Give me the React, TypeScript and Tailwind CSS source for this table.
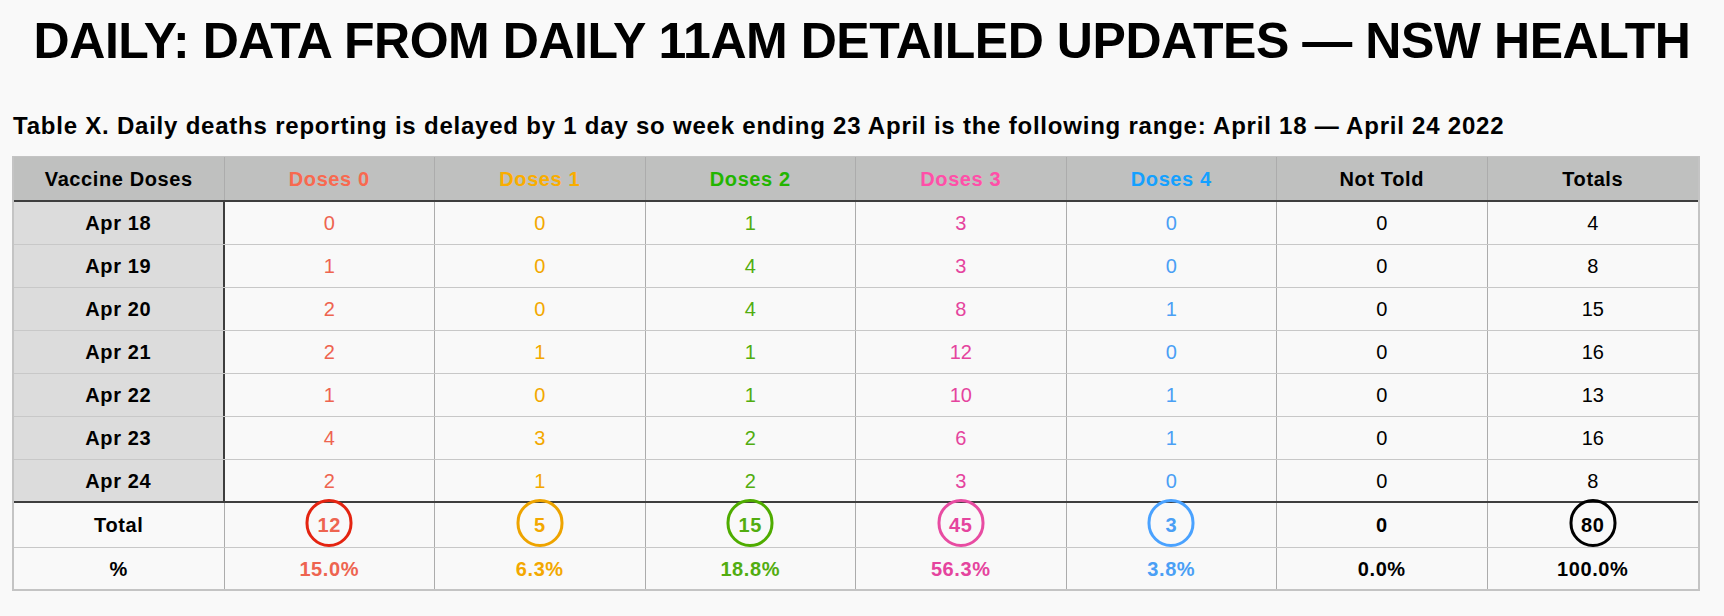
import React from "react";

type Col = { head: string; headColor: string; body: string; circle: string; pct: string };

const cols: Col[] = [
  { head: "Doses 0", headColor: "text-[#f8694f]", body: "text-[#ee6450]", circle: "border-[#e42411]", pct: "15.0%" },
  { head: "Doses 1", headColor: "text-[#f9ad00]", body: "text-[#f3a800]", circle: "border-[#eea400]", pct: "6.3%" },
  { head: "Doses 2", headColor: "text-[#22b500]", body: "text-[#52ad10]", circle: "border-[#4fac00]", pct: "18.8%" },
  { head: "Doses 3", headColor: "text-[#ff4fa8]", body: "text-[#e5449e]", circle: "border-[#e84ca2]", pct: "56.3%" },
  { head: "Doses 4", headColor: "text-[#14a0ff]", body: "text-[#4a9ff5]", circle: "border-[#4aa2ff]", pct: "3.8%" },
];

const rows: { day: string; v: number[]; nt: number; tot: number }[] = [
  { day: "Apr 18", v: [0, 0, 1, 3, 0], nt: 0, tot: 4 },
  { day: "Apr 19", v: [1, 0, 4, 3, 0], nt: 0, tot: 8 },
  { day: "Apr 20", v: [2, 0, 4, 8, 1], nt: 0, tot: 15 },
  { day: "Apr 21", v: [2, 1, 1, 12, 0], nt: 0, tot: 16 },
  { day: "Apr 22", v: [1, 0, 1, 10, 1], nt: 0, tot: 13 },
  { day: "Apr 23", v: [4, 3, 2, 6, 1], nt: 0, tot: 16 },
  { day: "Apr 24", v: [2, 1, 2, 3, 0], nt: 0, tot: 8 },
];

const totals = [12, 5, 15, 45, 3];

const cell = "flex items-center justify-center border-r border-[#acacac]";
const bold = "font-bold tracking-[0.6px]";

export default function App() {
  return (
    <div className="w-[1724px] h-[616px] overflow-hidden bg-[#f9f9f9] text-black font-['Liberation_Sans',Arial,sans-serif]">
      <div className="pt-[16px] text-center text-[50px] leading-[50px] font-bold tracking-[-0.45px]">
        DAILY: DATA FROM DAILY 11AM DETAILED UPDATES — NSW HEALTH
      </div>
      <div className="mt-[48px] pl-[13px] text-[24px] leading-[24px] font-bold tracking-[0.78px]">
        Table X. Daily deaths reporting is delayed by 1 day so week ending 23 April is the following range: April 18 — April 24 2022
      </div>
      <div className="mt-[18px] ml-[12px] w-[1688px] border-x-2 border-t border-[#c4c4c4] text-[20px]">
        {/* header */}
        <div className="grid grid-cols-8 h-[45px] bg-[#bfc0bf] border-b-2 border-[#3e3e3e]">
          <div className={`${cell} ${bold}`}>Vaccine Doses</div>
          {cols.map((c) => (
            <div key={c.head} className={`${cell} ${bold} ${c.headColor}`}>
              {c.head}
            </div>
          ))}
          <div className={`${cell} ${bold}`}>Not Told</div>
          <div className={`flex items-center justify-center ${bold}`}>Totals</div>
        </div>
        {/* body */}
        {rows.map((r, i) => (
          <div
            key={r.day}
            className={`grid grid-cols-8 h-[43px] ${
              i === rows.length - 1 ? "border-b-2 border-[#3e3e3e]" : "border-b border-[#c8c8c8]"
            }`}
          >
            <div className={`flex items-center justify-center bg-[#dcdcdc] border-r-2 border-[#3e3e3e] ${bold}`}>
              {r.day}
            </div>
            {r.v.map((v, j) => (
              <div key={j} className={`${cell} ${cols[j].body}`}>
                {v}
              </div>
            ))}
            <div className={cell}>{r.nt}</div>
            <div className="flex items-center justify-center">{r.tot}</div>
          </div>
        ))}
        {/* total */}
        <div className="grid grid-cols-8 h-[45px] border-b border-[#c8c8c8]">
          <div className={`${cell} ${bold}`}>Total</div>
          {totals.map((t, j) => (
            <div key={j} className={`${cell} relative ${bold} ${cols[j].body}`}>
              <span
                className={`absolute left-1/2 top-[-4px] -translate-x-1/2 w-[47px] h-[48px] rounded-full border-[3px] ${cols[j].circle}`}
              />
              <span className="relative">{t}</span>
            </div>
          ))}
          <div className={`${cell} ${bold}`}>0</div>
          <div className={`relative flex items-center justify-center ${bold}`}>
            <span className="absolute left-1/2 top-[-4px] -translate-x-1/2 w-[47px] h-[48px] rounded-full border-[3px] border-black" />
            <span className="relative">80</span>
          </div>
        </div>
        {/* percent */}
        <div className="grid grid-cols-8 h-[43px] border-b-2 border-[#c4c4c4]">
          <div className={`${cell} ${bold}`}>%</div>
          {cols.map((c) => (
            <div key={c.head} className={`${cell} ${bold} ${c.body}`}>
              {c.pct}
            </div>
          ))}
          <div className={`${cell} ${bold}`}>0.0%</div>
          <div className={`flex items-center justify-center ${bold}`}>100.0%</div>
        </div>
      </div>
    </div>
  );
}
